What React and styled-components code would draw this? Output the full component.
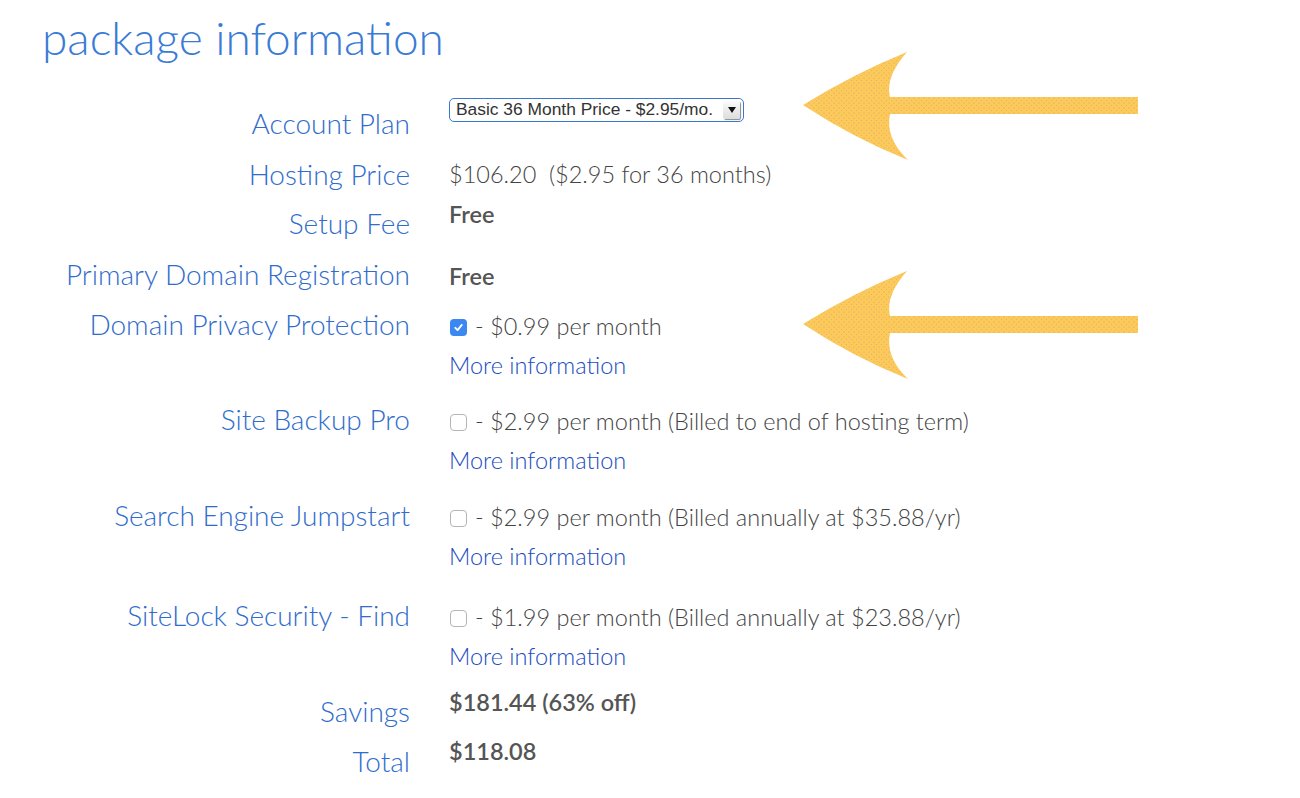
import React from "react";
import styled, { createGlobalStyle } from "styled-components";

const GlobalStyle = createGlobalStyle`
    body {
        margin: 0;
        background: #ffffff;
        font-family: Lato, "Open Sans", sans-serif;
    }
`;

const Page = styled.div`
    position: relative;
    width: 1300px;
    height: 798px;
    overflow: hidden;
    background: #fff;
`;

const Title = styled.h1`
    margin: 0;
    padding: 10px 0 0 42px;
    font-size: 46px;
    line-height: 1.2;
    font-weight: 300;
    color: #3a7bd5;
`;

const Form = styled.div`
    display: flex;
    flex-direction: column;
    margin-top: 41px;
`;

const Row = styled.div`
    display: grid;
    grid-template-columns: 410px 1fr;
    column-gap: 39px;
    align-items: start;
    margin-bottom: ${(p) => p.$gap}px;
`;

const Label = styled.div`
    text-align: right;
    font-size: 28px;
    line-height: 34px;
    font-weight: 300;
    color: #2f6ccc;
    white-space: nowrap;
`;

const Value = styled.div`
    margin-top: ${(p) => p.$offset || 0}px;
    display: flex;
    flex-direction: column;
    font-size: 23.5px;
    line-height: 34px;
    font-weight: ${(p) => (p.$bold ? 600 : 300)};
    color: ${(p) => (p.$bold ? "#555" : "#444")};
    white-space: nowrap;
`;

const Line = styled.div`
    display: flex;
    align-items: center;
    gap: 8px;
`;

const MoreLink = styled.a`
    font-size: 23.5px;
    line-height: 44px;
    font-weight: 300;
    color: #1a4cc0;
    text-decoration: none;
    cursor: pointer;
`;

const Select = styled.div`
    display: flex;
    align-items: center;
    justify-content: space-between;
    box-sizing: border-box;
    width: 295px;
    height: 24px;
    padding: 0 3px 0 6px;
    border: 1.5px solid #3a78d0;
    border-radius: 5px;
    font-family: "Liberation Sans", Arial, sans-serif;
    font-size: 17.4px;
    line-height: 1;
    font-weight: 400;
    color: #333;
    background: #fff;
`;

const SelectButton = styled.span`
    display: flex;
    align-items: center;
    justify-content: center;
    width: 17px;
    height: 18px;
    border-radius: 2px;
    background: linear-gradient(#fbfbfb, #dcdcdc);
    box-shadow: 1px 1px 1px #8a8a8a;
    &::after {
        content: "";
        border-left: 4px solid transparent;
        border-right: 4px solid transparent;
        border-top: 6px solid #111;
    }
`;

const Check = styled.span`
    display: inline-flex;
    align-items: center;
    justify-content: center;
    box-sizing: border-box;
    width: 17px;
    height: 17px;
    margin: 2px 0 0 1px;
    border-radius: 4px;
    border: ${(p) => (p.$on ? "none" : "1px solid #b5b5b5")};
    background: ${(p) => (p.$on ? "#3b88f0" : "#fff")};
`;

const Arrow = styled.svg`
    position: absolute;
    left: 803px;
    top: ${(p) => p.$top}px;
    width: 336px;
    height: 110px;
`;

function ArrowMark({ top, id }) {
    return (
        <Arrow $top={top} viewBox="0 0 336 110">
            <defs>
                <pattern id={id} width="5" height="5" patternUnits="userSpaceOnUse">
                    <rect width="5" height="5" fill="#fdc958" />
                    <circle cx="1" cy="1" r="0.6" fill="#c3a98a" />
                    <circle cx="3.5" cy="3.5" r="0.5" fill="#d0ad7c" />
                </pattern>
            </defs>
            <path
                d="M0,53 Q50,22 104,0 Q82,25 87,45 L335,45 L335,62 L87,62 Q82,86 105,108 Q50,86 0,53 Z"
                fill={`url(#${id})`}
            />
        </Arrow>
    );
}

function CheckBox({ on }) {
    return (
        <Check $on={on}>
            {on && (
                <svg width="11" height="11" viewBox="0 0 12 12">
                    <path
                        d="M2.5 6.3 L5 8.8 L9.6 3.2"
                        fill="none"
                        stroke="#fff"
                        strokeWidth="2"
                        strokeLinecap="round"
                        strokeLinejoin="round"
                    />
                </svg>
            )}
        </Check>
    );
}

const addons = [
    {
        label: "Domain Privacy Protection",
        text: "- $0.99 per month",
        on: true,
    },
    {
        label: "Site Backup Pro",
        text: "- $2.99 per month (Billed to end of hosting term)",
    },
    {
        label: "Search Engine Jumpstart",
        text: "- $2.99 per month (Billed annually at $35.88/yr)",
    },
    {
        label: "SiteLock Security - Find",
        text: "- $1.99 per month (Billed annually at $23.88/yr)",
    },
];

const addonGaps = [15, 16, 20, 16];

export default function App() {
    return (
        <Page>
            <GlobalStyle />
            <Title>package information</Title>
            <Form>
                <Row $gap={17}>
                    <Label>Account Plan</Label>
                    <Value $offset={-8}>
                        <Select>
                            <span>Basic 36 Month Price - $2.95/mo.</span>
                            <SelectButton />
                        </Select>
                    </Value>
                </Row>
                <Row $gap={15}>
                    <Label>Hosting Price</Label>
                    <Value>$106.20&nbsp; ($2.95 for 36 months)</Value>
                </Row>
                <Row $gap={17}>
                    <Label>Setup Fee</Label>
                    <Value $offset={-9} $bold>
                        Free
                    </Value>
                </Row>
                <Row $gap={14}>
                    <Label>Primary Domain Registration</Label>
                    <Value $offset={2} $bold>
                        Free
                    </Value>
                </Row>
                {addons.map((a, i) => (
                    <Row key={a.label} $gap={addonGaps[i]}>
                        <Label>{a.label}</Label>
                        <Value $offset={2}>
                            <Line>
                                <CheckBox on={a.on} />
                                <span>{a.text}</span>
                            </Line>
                            <MoreLink>More information</MoreLink>
                        </Value>
                    </Row>
                ))}
                <Row $gap={16}>
                    <Label>Savings</Label>
                    <Value $offset={-9} $bold>
                        $181.44 (63% off)
                    </Value>
                </Row>
                <Row $gap={0}>
                    <Label>Total</Label>
                    <Value $offset={-10} $bold>
                        $118.08
                    </Value>
                </Row>
            </Form>
            <ArrowMark top={52} id="dots1" />
            <ArrowMark top={271} id="dots2" />
        </Page>
    );
}
